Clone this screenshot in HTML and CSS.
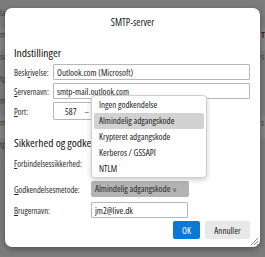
FILE: index.html
```html
<!DOCTYPE html>
<html lang="da">
<head>
    <meta charset="UTF-8">
    <meta name="viewport" content="width=device-width, initial-scale=1.0">
    <title>SMTP-server</title>
    <link rel="stylesheet" href="styles.css">
</head>
<body>
    <!-- faint app window behind the modal -->
    <div class="backdrop">
        <div class="bg-row">la</div>
        <div class="bg-row band">m<span class="bg-right red">T</span></div>
        <div class="bg-row">se<span class="bg-right">s</span></div>
        <div class="bg-row">tp</div>
        <div class="bg-row">m</div>
        <div class="bg-row band">m<span class="bg-right">s</span></div>
        <div class="bg-row">tp</div>
    </div>

    <div class="dialog">
        <div class="dialog-title">SMTP-server</div>
        <div class="dialog-body">
            <h4 class="section-title">Indstillinger</h4>
            <div class="settings-grid">
                <label>Besk<u>r</u>ivelse:</label>
                <input class="field" type="text" value="Outlook.com (Microsoft)">
                <label><u>S</u>ervernavn:</label>
                <input class="field" type="text" value="smtp-mail.outlook.com">
                <label><u>P</u>ort:</label>
                <div class="field port-field"><span>587</span><span class="spin">&ndash;</span></div>
            </div>

            <h4 class="section-title security">Sikkerhed og godke</h4>
            <div class="form-row first">
                <label><u>F</u>orbindelsessikkerhed:</label>
                <div class="select-btn plain"></div>
            </div>
            <div class="form-row method">
                <label><u>G</u>odkendelsesmetode:</label>
                <div class="select-btn open">Almindelig adgangskode <span class="chev">&#8744;</span></div>
            </div>
            <div class="form-row user">
                <label><u>B</u>rugernavn:</label>
                <input class="field" type="text" value="jm2@live.dk">
            </div>

            <div class="dialog-buttons">
                <button class="btn primary">OK</button>
                <button class="btn">Annuller</button>
            </div>
        </div>
        <svg class="grip" width="9" height="9" viewBox="0 0 9 9">
            <path d="M8 1L1 8M8 4L4 8M8 7L7 8" stroke="#8a8a8a" stroke-width="1"/>
        </svg>
    </div>

    <ul class="popup">
        <li>Ingen godkendelse</li>
        <li class="selected">Almindelig adgangskode</li>
        <li>Krypteret adgangskode</li>
        <li>Kerberos / GSSAPI</li>
        <li>NTLM</li>
    </ul>
</body>
</html>
```

FILE: styles.css
```css
* {
    margin: 0;
    padding: 0;
    box-sizing: border-box;
}

body {
    width: 265px;
    height: 257px;
    overflow: hidden;
    background-color: #7c7c7c;
    font-family: "Open Sans", "Noto Sans", sans-serif;
    font-stretch: 75%;
    font-size: 9px;
    color: #1a1a1a;
    position: relative;
}

input,
button {
    font-family: inherit;
    font-stretch: inherit;
}

.backdrop {
    padding-top: 6px;
    color: #3e3e3e;
    font-size: 9px;
}

.bg-row {
    height: 22px;
    line-height: 14px;
    position: relative;
}

.bg-row.band {
    background-color: #858585;
}

.bg-right {
    position: absolute;
    left: 261px;
    top: 0;
}

.bg-right.red {
    color: #4a1f1f;
    font-weight: bold;
}

.dialog {
    position: absolute;
    left: 5px;
    top: 8px;
    width: 255px;
    height: 239px;
    background-color: #fff;
    border-radius: 7px;
    box-shadow: 0 2px 6px rgba(0, 0, 0, 0.35);
}

.dialog-title {
    height: 28px;
    line-height: 28px;
    text-align: center;
    font-size: 10px;
    color: #222;
}

.dialog-body {
    padding: 0 10px 0 9px;
}

.section-title {
    font-size: 11.5px;
    font-weight: normal;
    line-height: 14px;
    margin-top: 10px;
    color: #111;
}

.section-title.security {
    margin-top: 16px;
}

.settings-grid {
    display: grid;
    grid-template-columns: 39px 1fr;
    grid-template-rows: 16px 16px 18px;
    row-gap: 3px;
    align-items: center;
    margin-top: 4px;
}

label {
    font-size: 8.5px;
    color: #2a2a2a;
    white-space: nowrap;
}

.field {
    height: 16px;
    border: 1px solid #b8b8b8;
    border-radius: 1px;
    padding: 0 3px;
    font-size: 9px;
    color: #1a1a1a;
    background-color: #fff;
    outline: none;
    width: 100%;
}

.port-field {
    height: 18px;
    width: 60px;
    display: flex;
    align-items: center;
    gap: 8px;
    padding-left: 11px;
}

.spin {
    color: #555;
}

.form-row {
    display: flex;
    align-items: center;
}

.form-row label {
    width: 77px;
    flex-shrink: 0;
}

.form-row.first {
    margin-top: 3px;
    height: 20px;
}

.form-row.method {
    margin-top: 8px;
    height: 16px;
}

.form-row.user {
    margin-top: 5px;
    height: 16px;
}

.form-row .field {
    width: 97px;
}

.select-btn {
    width: 98px;
    height: 16px;
    line-height: 16px;
    padding: 0 4px;
    border-radius: 2px;
    background-color: #e6e6e6;
    white-space: nowrap;
    font-size: 9px;
}

.select-btn.open {
    background-color: #b3b3b3;
    color: #2a2a2a;
}

.chev {
    font-size: 7px;
    color: #555;
}

.dialog-buttons {
    display: flex;
    justify-content: flex-end;
    gap: 5px;
    margin-top: 3px;
}

.btn {
    height: 18px;
    width: 45px;
    border: none;
    border-radius: 2px;
    background-color: #e8e8e8;
    color: #1a1a1a;
    font-size: 9px;
}

.btn.primary {
    width: 27px;
    background-color: #0a78d4;
    color: #fff;
}

.grip {
    position: absolute;
    right: 1px;
    bottom: 1px;
}

.popup {
    position: absolute;
    left: 91px;
    top: 95px;
    width: 116px;
    height: 83px;
    list-style: none;
    background-color: #fff;
    border: 1px solid #cfcfcf;
    border-radius: 4px;
    box-shadow: 0 2px 5px rgba(0, 0, 0, 0.2);
    padding: 1px 2px;
}

.popup li {
    height: 16px;
    line-height: 16px;
    padding-left: 5px;
    font-size: 9px;
    color: #1a1a1a;
    border-radius: 2px;
    white-space: nowrap;
}

.popup li.selected {
    background-color: #d2d2d2;
}
```
